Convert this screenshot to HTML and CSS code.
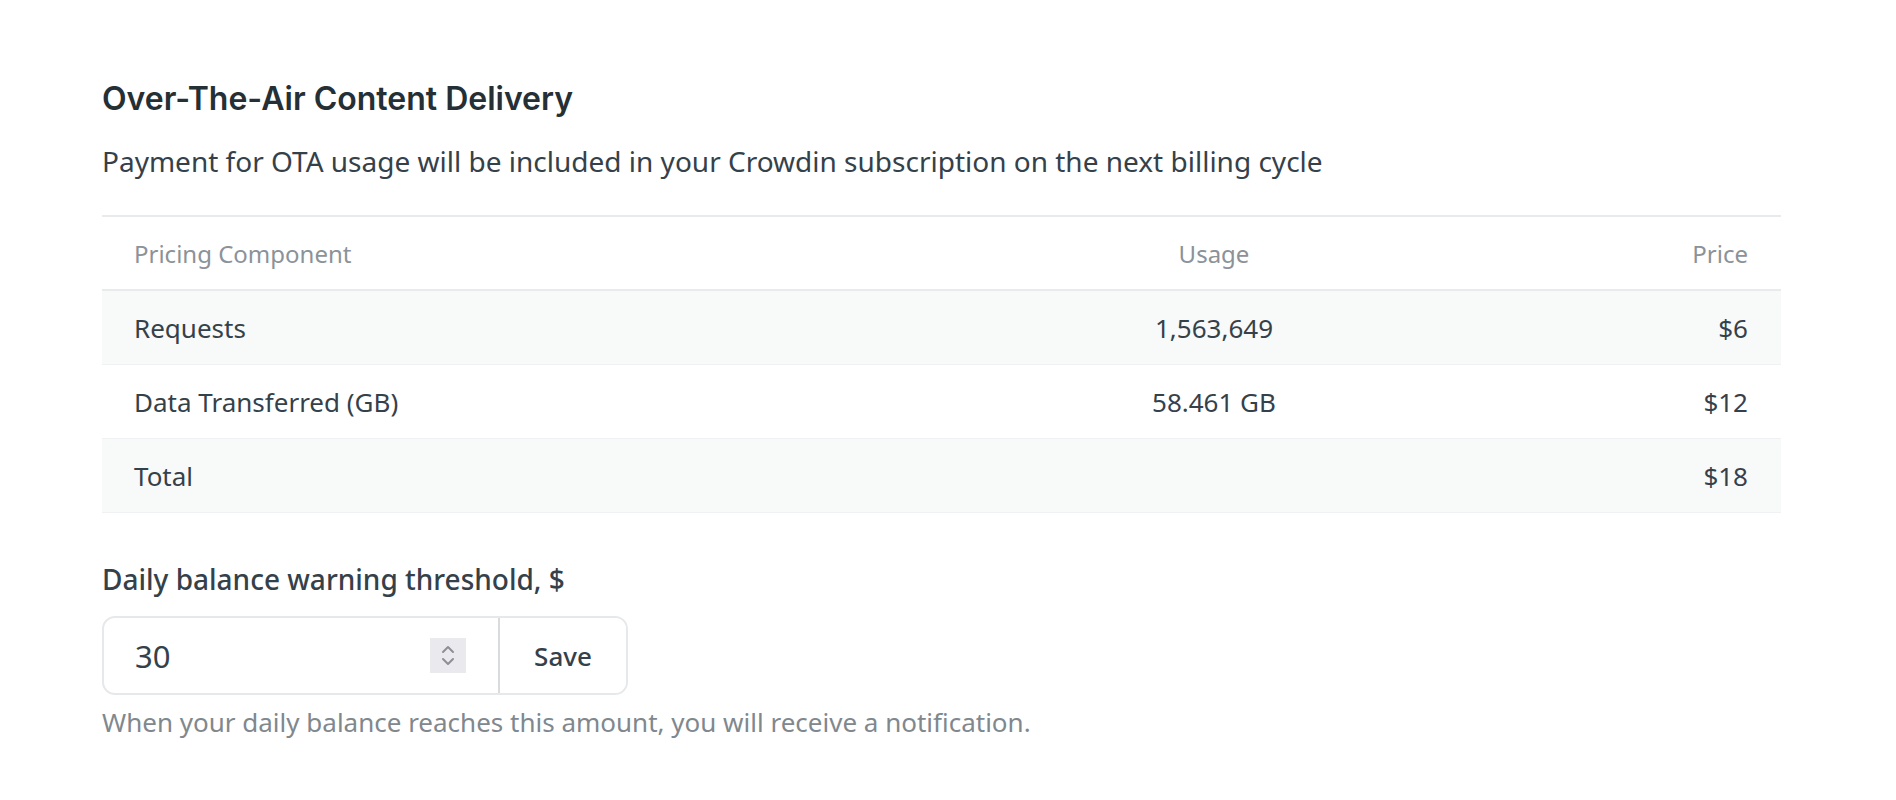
FILE: index.html
```html
<!DOCTYPE html>
<html lang="en">
<head>
<meta charset="utf-8">
<title>Over-The-Air Content Delivery</title>
<link rel="stylesheet" href="styles.css">
</head>
<body>
<main class="page">
  <h1 class="title">Over-The-Air Content Delivery</h1>
  <p class="subtitle">Payment for OTA usage will be included in your Crowdin subscription on the next billing cycle</p>

  <div class="table">
    <div class="row head">
      <div class="cell c1">Pricing Component</div>
      <div class="cell c2">Usage</div>
      <div class="cell c3">Price</div>
    </div>
    <div class="row alt">
      <div class="cell c1">Requests</div>
      <div class="cell c2">1,563,649</div>
      <div class="cell c3">$6</div>
    </div>
    <div class="row">
      <div class="cell c1">Data Transferred (GB)</div>
      <div class="cell c2">58.461 GB</div>
      <div class="cell c3">$12</div>
    </div>
    <div class="row alt">
      <div class="cell c1">Total</div>
      <div class="cell c2"></div>
      <div class="cell c3">$18</div>
    </div>
  </div>

  <label class="label" for="threshold">Daily balance warning threshold, $</label>
  <div class="group">
    <input id="threshold" class="num" type="text" value="30">
    <span class="spin">
      <svg width="36" height="35" viewBox="0 0 36 35" aria-hidden="true">
        <path d="M13 14 L18 9 L23 14" fill="none" stroke="#8e9096" stroke-width="2" stroke-linecap="round" stroke-linejoin="round"/>
        <path d="M13 21 L18 26 L23 21" fill="none" stroke="#8e9096" stroke-width="2" stroke-linecap="round" stroke-linejoin="round"/>
      </svg>
    </span>
    <button class="save" type="button">Save</button>
  </div>
  <p class="help">When your daily balance reaches this amount, you will receive a notification.</p>
</main>
</body>
</html>
```

FILE: styles.css
```css
html, body {
  margin: 0;
  padding: 0;
  background: #ffffff;
}

body {
  font-family: "Noto Sans", "Open Sans", sans-serif;
  color: #35414a;
}

.page {
  padding: 79px 115px 0 102px;
}

.title {
  margin: 0;
  font-family: Inter, "Noto Sans", sans-serif;
  font-weight: 600;
  font-size: 32px;
  line-height: 40px;
  letter-spacing: 0;
  color: #252f36;
}

.subtitle {
  margin: 24px 0 0;
  font-size: 28px;
  line-height: 36px;
  color: #35414a;
}

.table {
  margin-top: 36px;
  border-top: 2px solid #e8eaeb;
}

.row {
  display: grid;
  grid-template-columns: 1fr 400px 367px;
  height: 73px;
  align-items: center;
  border-bottom: 1px solid #eff1f2;
  font-size: 26px;
  color: #35414a;
}

.row.head {
  height: 72px;
  border-bottom: 2px solid #e8eaeb;
  font-size: 24px;
  color: #8b9298;
}

.row.alt {
  background: #f8f9f9;
}

.cell.c1 {
  padding-left: 32px;
}

.cell.c2 {
  text-align: center;
}

.cell.c3 {
  text-align: right;
  padding-right: 33px;
}

.label {
  display: block;
  margin-top: 48px;
  font-size: 28px;
  line-height: 36px;
  font-weight: 500;
  color: #35414a;
}

.group {
  margin-top: 19px;
  width: 526px;
  height: 79px;
  box-sizing: border-box;
  border: 2px solid #e6e8ea;
  border-radius: 13px;
  display: flex;
  align-items: center;
  overflow: hidden;
}

.num {
  flex: 1;
  min-width: 0;
  border: none;
  outline: none;
  background: transparent;
  padding: 0 0 0 31px;
  margin: 0;
  font-family: "Noto Sans", sans-serif;
  font-size: 31px;
  color: #35414a;
}

.spin {
  display: flex;
  width: 36px;
  height: 35px;
  background: #e9e9ee;
  margin-right: 32px;
}

.save {
  align-self: stretch;
  width: 128px;
  border: none;
  border-left: 2px solid #d9dbdd;
  background: #ffffff;
  margin: 0;
  padding: 0;
  font-family: "Noto Sans", sans-serif;
  font-size: 26px;
  font-weight: 500;
  color: #35414a;
}

.help {
  margin: 11px 0 0;
  font-size: 26px;
  line-height: 32px;
  color: #80888e;
}
```
